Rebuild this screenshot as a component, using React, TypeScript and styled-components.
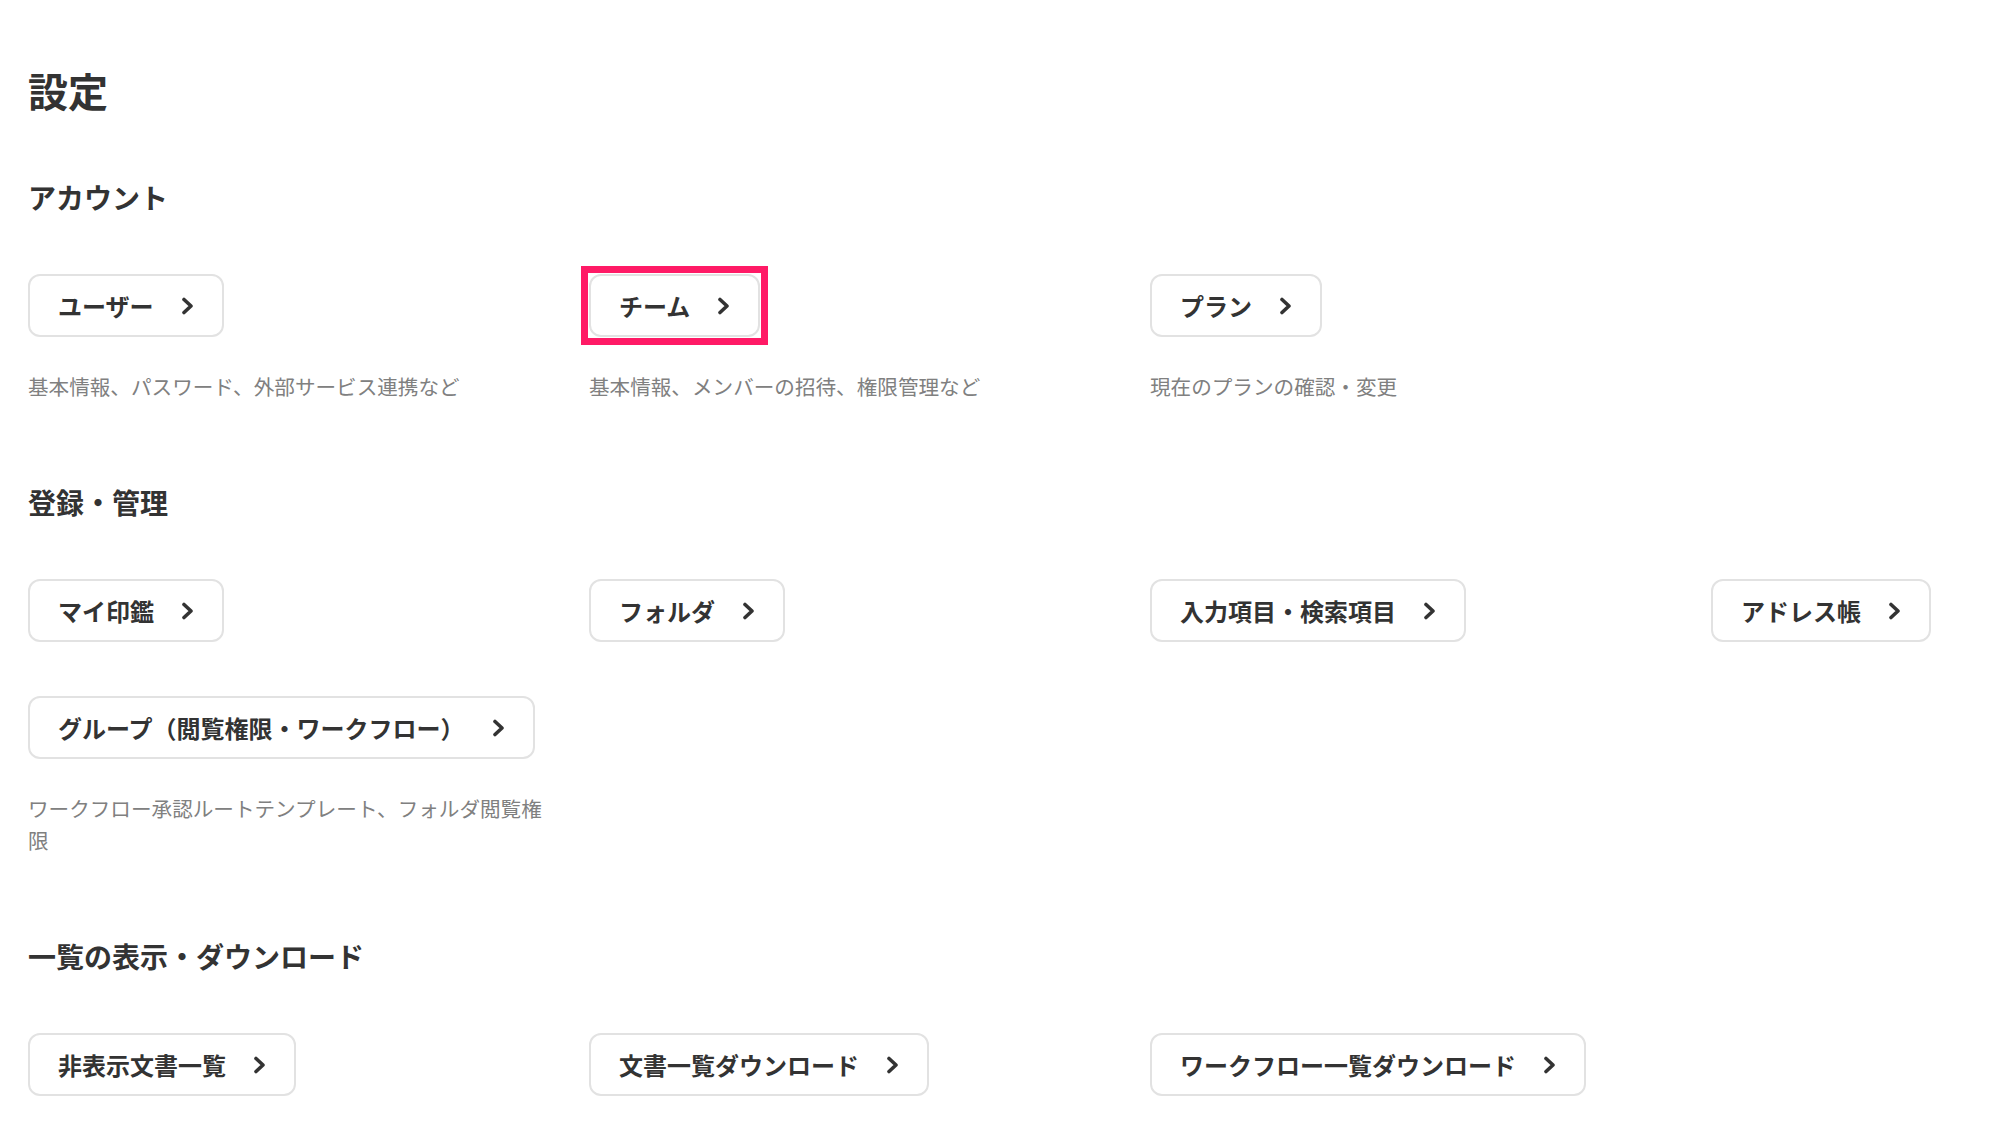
import styled, { createGlobalStyle } from "styled-components";

const GlobalStyle = createGlobalStyle`
  html, body {
    margin: 0;
    padding: 0;
    background: #ffffff;
    overflow: hidden;
  }
  body {
    font-family: "Noto Sans CJK JP", "Noto Sans", sans-serif;
    color: #333333;
  }
`;

const Page = styled.main`
  padding: 62px 0 0 28px;
`;

const Title = styled.h1`
  margin: 0 0 59px;
  font-size: 40px;
  line-height: 56px;
  font-weight: 700;
  color: #333;
`;

const Section = styled.section`
  margin-bottom: 80px;
`;

const SectionTitle = styled.h2`
  margin: 0 0 57px;
  font-size: 28px;
  line-height: 40px;
  font-weight: 700;
  color: #333;
`;

const Grid = styled.div`
  display: grid;
  grid-template-columns: repeat(3, 541px) minmax(0, 1fr);
  column-gap: 20px;
  row-gap: 54px;
  align-items: start;
`;

const Item = styled.div<{ $newRow?: boolean }>`
  display: flex;
  flex-direction: column;
  align-items: flex-start;
  grid-column: ${(props) => (props.$newRow ? "1 / 2" : "auto")};
`;

const LinkButton = styled.button<{ $highlight?: boolean }>`
  position: relative;
  display: inline-flex;
  align-items: center;
  gap: 27px;
  height: 63px;
  padding: 0 28px;
  background: #fff;
  border: 2px solid #e2e2e2;
  border-radius: 12px;
  font-family: inherit;
  font-size: 24px;
  font-weight: 700;
  color: #333;
  cursor: pointer;
  white-space: nowrap;

  &::after {
    content: "";
    display: ${(props) => (props.$highlight ? "block" : "none")};
    position: absolute;
    top: -10px;
    left: -10px;
    right: -10px;
    bottom: -10px;
    border: 7px solid #ff1a66;
    pointer-events: none;
  }
`;

const Description = styled.p`
  margin: 33px 0 0;
  max-width: 525px;
  font-size: 20.6px;
  line-height: 32px;
  color: #808080;
`;

const Chevron = () => (
  <svg width="13" height="18" viewBox="0 0 13 18" fill="none">
    <polyline
      points="3,2.5 10,9 3,15.5"
      stroke="#333"
      strokeWidth="3.6"
      strokeLinecap="round"
      strokeLinejoin="round"
    />
  </svg>
);

interface IEntry {
  label: string;
  desc?: string;
  highlight?: boolean;
  newRow?: boolean;
}

interface ISection {
  title: string;
  items: IEntry[];
}

const sections: ISection[] = [
  {
    title: "アカウント",
    items: [
      { label: "ユーザー", desc: "基本情報、パスワード、外部サービス連携など" },
      { label: "チーム", desc: "基本情報、メンバーの招待、権限管理など", highlight: true },
      { label: "プラン", desc: "現在のプランの確認・変更" },
    ],
  },
  {
    title: "登録・管理",
    items: [
      { label: "マイ印鑑" },
      { label: "フォルダ" },
      { label: "入力項目・検索項目" },
      { label: "アドレス帳" },
      {
        label: "グループ（閲覧権限・ワークフロー）",
        desc: "ワークフロー承認ルートテンプレート、フォルダ閲覧権限",
        newRow: true,
      },
    ],
  },
  {
    title: "一覧の表示・ダウンロード",
    items: [
      { label: "非表示文書一覧" },
      { label: "文書一覧ダウンロード" },
      { label: "ワークフロー一覧ダウンロード" },
    ],
  },
];

function App() {
  return (
    <>
      <GlobalStyle />
      <Page>
        <Title>設定</Title>
        {sections.map((section) => (
          <Section key={section.title}>
            <SectionTitle>{section.title}</SectionTitle>
            <Grid>
              {section.items.map((item) => (
                <Item key={item.label} $newRow={item.newRow}>
                  <LinkButton $highlight={item.highlight}>
                    {item.label}
                    <Chevron />
                  </LinkButton>
                  {item.desc && <Description>{item.desc}</Description>}
                </Item>
              ))}
            </Grid>
          </Section>
        ))}
      </Page>
    </>
  );
}

export default App;
